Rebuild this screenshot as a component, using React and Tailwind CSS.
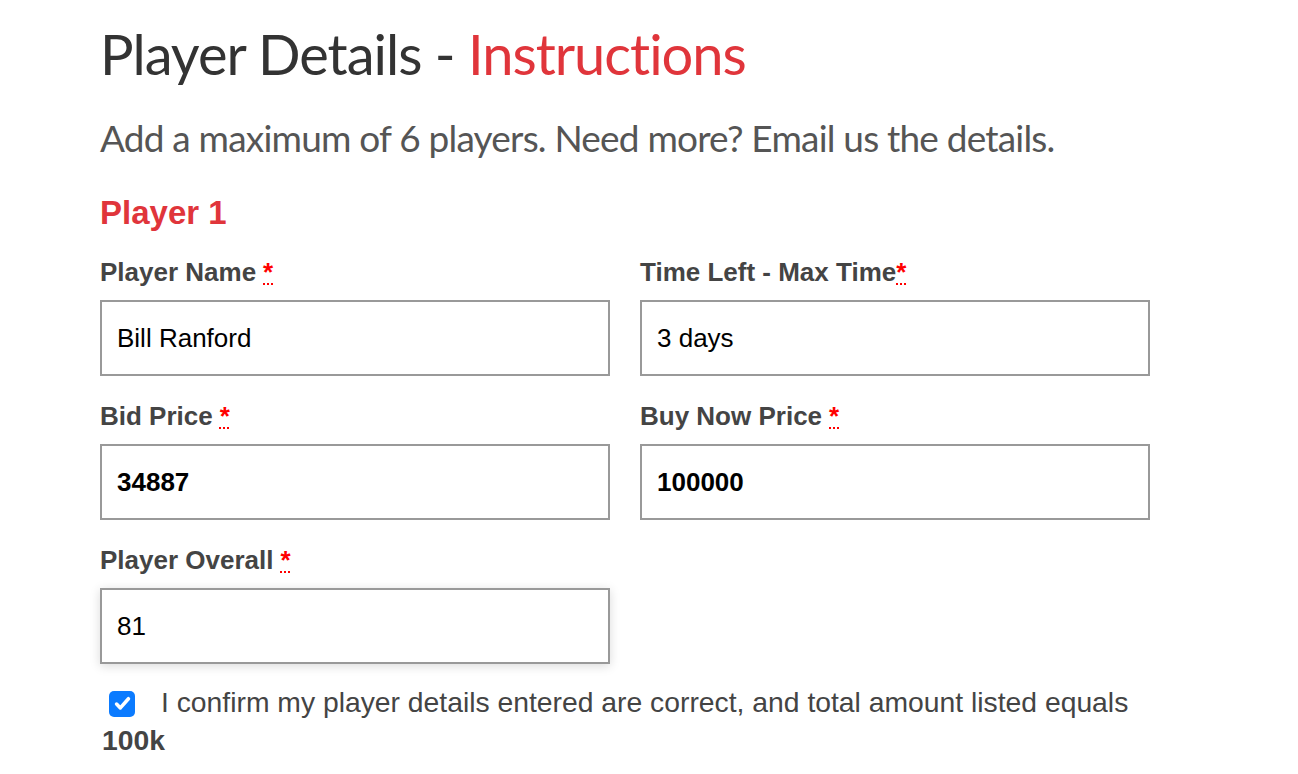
export default function App() {
  const Req = () => (
    <abbr
      title="required"
      className="ml-[7px] text-[#ff0000] underline decoration-dotted decoration-[#ff0000] decoration-2 underline-offset-[2px]"
    >
      *
    </abbr>
  );

  const Field = ({ label, value, bold, tight, shadow }) => (
    <div className="flex flex-col">
      <label className="text-[26px] leading-[30px] font-bold text-[#444]">
        {label}
        <span className={tight ? '-ml-[7px]' : ''}>
          <Req />
        </span>
      </label>
      <div
        className={
          'mt-[13px] h-[76px] w-[510px] border-2 border-[#999] bg-white px-[15px] flex items-center text-[26px] text-black ' +
          (bold ? 'font-bold ' : '') +
          (shadow ? 'shadow-[0_2px_10px_rgba(0,0,0,0.15)]' : '')
        }
      >
        {value}
      </div>
    </div>
  );

  return (
    <div className="min-h-screen bg-white px-[100px] pt-[22px] font-['Liberation_Sans',Arial,sans-serif]">
      <h1 className="font-['Lato',sans-serif] text-[56px] leading-[64px] tracking-[-1px] text-[#333] [font-variant-ligatures:none]">
        Player Details - <span className="text-[#e0353b]">Instructions</span>
      </h1>
      <p className="mt-[30px] font-['Lato',sans-serif] text-[37px] leading-[44px] tracking-[-0.8px] text-[#555] [font-variant-ligatures:none]">
        Add a maximum of 6 players. Need more? Email us the details.
      </p>
      <h2 className="mt-[33px] text-[33px] leading-[40px] font-bold text-[#e0353b]">Player 1</h2>

      <div className="mt-[24px] grid grid-cols-[510px_510px] gap-x-[30px] gap-y-[25px]">
        <Field label="Player Name" value="Bill Ranford" />
        <Field label="Time Left - Max Time" value="3 days" tight />
        <Field label="Bid Price" value="34887" bold />
        <Field label="Buy Now Price" value="100000" bold />
        <Field label="Player Overall" value="81" shadow />
      </div>

      <div className="mt-[19px] max-w-[1050px] text-[28.3px] leading-[38px] text-[#444]">
        <span className="inline-flex align-[-1px] ml-[9px] mr-[26px] h-[26px] w-[26px] items-center justify-center rounded-[5px] bg-[#0b7bff]">
          <svg viewBox="0 0 16 16" className="h-[19px] w-[19px]" fill="none" stroke="white" strokeWidth="3" strokeLinecap="round" strokeLinejoin="round">
            <path d="M3 8.5l3.2 3.2L13 4" />
          </svg>
        </span>
        I confirm my player details entered are correct, and total amount listed equals <b className="ml-[2px] font-bold">100k</b>
      </div>
    </div>
  );
}
